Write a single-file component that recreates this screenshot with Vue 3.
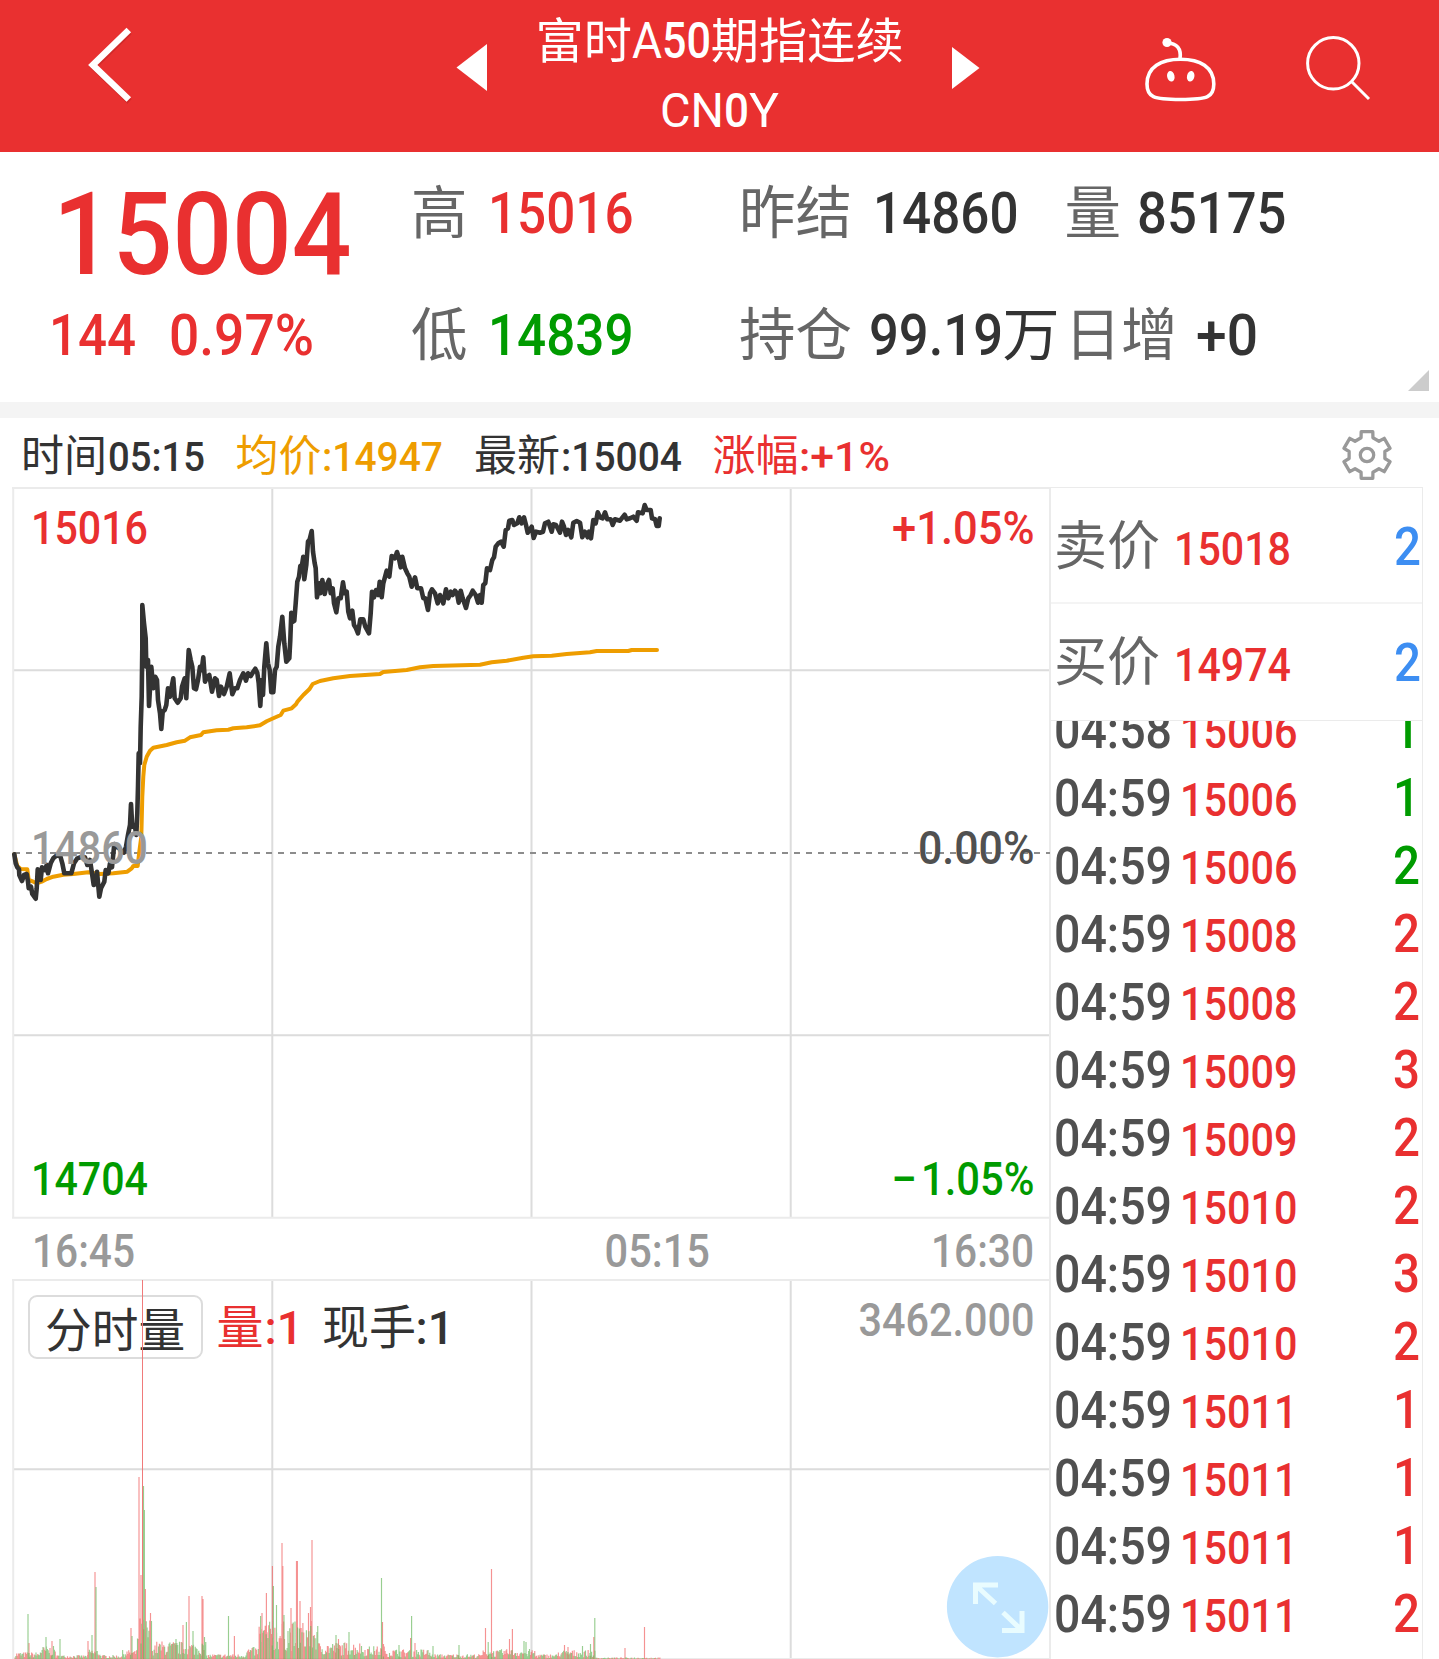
<script setup>
// Stretches a piece of text horizontally so that it takes exactly `value` pixels in the flow.
const vFit = {
  mounted(el, { value }) {
    const natural = el.getBoundingClientRect().width
    el.style.transform = `scaleX(${value / natural})`
    el.style.marginRight = `${value - natural}px`
  },
}

const quotes = [
  { label: '高', value: '15016', w: 145.5, tone: 'up', gap: 20.5 },
  { label: '昨结', value: '14860', w: 145.5, tone: '', gap: 20.5 },
  { label: '量', value: '85175', w: 149.5, tone: '', gap: 16 },
  { label: '低', value: '14839', w: 145.5, tone: 'down', gap: 20.5 },
  { label: '持仓', value: '99.19', w: 134, unit: '万', tone: '', gap: 16.5 },
  { label: '日增', value: '+0', w: 62, tone: '', gap: 18 },
]

const infos = [
  { label: '时间', value: '05:15', w: 97, tone: '' },
  { label: '均价', value: ':14947', w: 121, tone: 'avg' },
  { label: '最新', value: ':15004', w: 121, tone: '' },
  { label: '涨幅', value: ':+1%', w: 91, tone: 'up' },
]

const trades = [
  ['04:58', 15006, 1, 'down'],
  ['04:59', 15006, 1, 'down'],
  ['04:59', 15006, 2, 'down'],
  ['04:59', 15008, 2, 'up'],
  ['04:59', 15008, 2, 'up'],
  ['04:59', 15009, 3, 'up'],
  ['04:59', 15009, 2, 'up'],
  ['04:59', 15010, 2, 'up'],
  ['04:59', 15010, 3, 'up'],
  ['04:59', 15010, 2, 'up'],
  ['04:59', 15011, 1, 'up'],
  ['04:59', 15011, 1, 'up'],
  ['04:59', 15011, 1, 'up'],
  ['04:59', 15011, 2, 'up'],
]

const labels = [
  { x: 31, y: 544, w: 117, fill: '#e93030', text: '15016' },
  { x: 31, y: 864, w: 117, fill: '#999', text: '14860' },
  { x: 31, y: 1195, w: 117, fill: '#009b00', text: '14704' },
  { x: 892, y: 544, w: 142.5, fill: '#e93030', text: '+1.05%' },
  { x: 918, y: 864, w: 116.5, fill: '#505050', text: '0.00%' },
  { x: 891, y: 1195, w: 26, fill: '#009b00', text: '−' },
  { x: 921, y: 1195, w: 113.5, fill: '#009b00', text: '1.05%' },
  { x: 32, y: 1266.7, w: 103, fill: '#999', text: '16:45' },
  { x: 604.5, y: 1266.7, w: 105.5, fill: '#999', text: '05:15' },
  { x: 931, y: 1266.7, w: 103, fill: '#999', text: '16:30' },
  { x: 858.5, y: 1336, w: 176, fill: '#999', text: '3462.000' },
  { x: 264.5, y: 1344.3, w: 38.5, fill: '#e93030', text: ':1' },
  { x: 415.5, y: 1344.3, w: 38.5, fill: '#333', text: ':1' },
]

// Gear outline: six teeth, each described by four polar points.
const gear = (() => {
  const pts = []
  for (let i = 0; i < 6; i++) {
    for (const [a, r] of [[-19, 18.2], [-14, 24], [14, 24], [19, 18.2]]) {
      const t = ((i * 60 - 90 + a) * Math.PI) / 180
      pts.push(`${(r * Math.cos(t)).toFixed(2)},${(r * Math.sin(t)).toFixed(2)}`)
    }
  }
  return pts.join(' ')
})()

// Line series are stored in thirds of a pixel, in two chunks with their own origin.
const toPoints = (chunks) =>
  chunks
    .map(([ox, oy, s]) =>
      s.split(' ').map((p) => {
        const [x, y] = p.split(',').map(Number)
        return `${(ox + x / 3).toFixed(1)},${(oy + y / 3).toFixed(1)}`
      }).join(' '))
    .join(' ')

const priceLine = toPoints([
  [0, 580, '43,823 47,850 52,862 57,868 58,885 66,903 72,885 80,882 84,905 86,925 93,920 97,942 107,956 110,925 113,868 122,900 126,862 134,870 140,855 144,880 152,850 160,835 168,828 180,825 187,850 193,880 214,880 222,850 232,835 240,832 255,832 262,855 270,840 276,880 281,915 287,912 291,875 298,950 303,925 313,905 317,870 325,880 330,850 336,862 343,792 350,800 358,805 365,815 372,818 378,800 384,765 390,735 393,672 397,740 404,735 409,765 412,700 414,620 416,520 420,550 422,440 425,350 427,200 427,75 432,130 437,175 439,260 444,240 447,378 454,260 460,325 466,290 471,300 474,360 480,400 484,447 488,395 494,390 499,375 504,325 510,350 515,320 520,295 524,355 533,368 542,355 546,320 554,295 559,355 566,210 572,240 577,260 582,325 588,328 594,300 600,260 605,270 610,232 615,305 622,290 628,285 636,335 645,295 650,300 657,348 663,320 672,342 680,320 689,280 697,343 705,325 712,325 720,300 730,280 738,302 744,280 752,288 760,275 766,266 772,278 776,310 781,378 785,300 789,345 793,260 799,190 804,250 809,270 814,337'],
  [240, 480, '95,637 100,637 105,570 110,560 115,500 120,470 127,410 133,490 139,545 148,535 151,480 154,398 158,425 163,422 167,370 172,305 177,290 181,258 186,255 190,230 193,298 199,255 204,185 209,178 215,153 219,215 224,250 227,265 231,352 238,310 241,340 247,300 254,342 260,315 267,300 272,340 278,325 282,370 289,397 295,355 302,355 309,307 314,340 320,335 325,395 330,415 337,392 342,435 348,445 354,460 361,418 370,418 376,440 387,460 392,400 396,335 402,352 408,330 415,345 419,305 425,352 430,310 440,272 448,290 455,228 465,235 471,216 476,232 482,262 487,230 495,265 502,280 508,290 515,320 525,292 532,325 543,325 550,355 556,355 564,390 570,340 576,328 585,340 593,370 600,345 610,370 618,328 625,355 632,335 638,345 645,332 651,340 656,368 662,332 668,355 678,384 685,355 692,345 698,332 707,345 714,368 720,345 725,368 730,315 736,310 741,265 750,270 757,240 762,232 767,200 775,190 783,185 791,200 797,150 804,145 808,122 817,120 822,135 832,130 838,112 845,130 852,112 858,135 863,158 875,140 881,174 888,155 900,158 909,155 915,130 925,125 935,155 940,133 948,135 960,158 966,125 972,140 978,165 985,150 994,172 1000,128 1010,123 1020,128 1027,172 1035,155 1043,172 1047,155 1053,175 1060,120 1067,130 1073,97 1080,112 1088,115 1095,97 1102,118 1112,118 1118,135 1125,118 1140,122 1154,104 1160,118 1170,115 1180,110 1190,122 1194,97 1208,100 1214,75 1220,90 1232,90 1236,115 1245,118 1250,138 1256,138 1259,115'],
])

const averageLine = toPoints([
  [0, 580, '43,823 52,858 62,867 82,868 86,900 100,905 110,910 125,905 140,897 160,890 190,884 220,882 265,877 300,882 340,880 382,875 395,865 400,858 413,858 418,815 424,770 427,650 430,590 433,555 440,530 450,512 460,503 500,495 530,487 555,482 570,472 603,465 610,457 650,451 685,449 700,445 740,442 780,436 800,424 820,415 842,405 850,392 875,385 888,373 893,364 910,345 928,328'],
  [240, 480, '218,612 240,603 280,595 330,588 420,582 430,576 500,570 540,562 580,558 720,554 755,547 800,542 850,533 880,529 935,527 980,522 1050,517 1070,513 1165,513 1175,510 1251,510'],
])

// Volume: a low base level per time range, plus the notable peaks [x, height, rising].
const levels = [
  [40, 7], [56, 13], [88, 4], [100, 10], [122, 4], [137, 9], [152, 42], [182, 18], [206, 17],
  [246, 5], [259, 12], [318, 38], [362, 17], [385, 13], [430, 10], [482, 5], [500, 9], [535, 10],
  [558, 5], [596, 9], [662, 1.6],
]
const peaks = [
  [28, 45, 0], [29, 16, 1], [46, 22, 0], [52, 18, 1], [60, 20, 0], [88, 18, 1], [92, 24, 0],
  [95, 87, 1], [96, 72, 0], [131, 31, 1], [132, 23, 0], [139, 182, 1], [141, 84, 1],
  [143.5, 173, 0], [144.4, 149, 0], [145.4, 70, 1], [150.5, 46, 1], [176, 20, 0], [183, 34, 1],
  [186.4, 37, 0], [189, 63, 1], [193, 28, 0], [202, 63, 1], [203, 60, 1], [204.5, 22, 0],
  [228.5, 43, 0], [234.4, 23, 1], [260.6, 43, 0], [262, 46, 1], [266.4, 66, 1], [272.4, 93, 1],
  [273.4, 73, 0], [276.5, 54, 0], [282, 116, 1], [282.8, 93, 1], [284, 44, 0], [291, 51, 1],
  [296.5, 98, 1], [297.4, 98, 1], [300, 58, 1], [308.5, 46, 1], [310.5, 52, 1], [312, 119, 1],
  [317, 27, 0], [336, 24, 0], [338.5, 20, 1], [349, 27, 0], [381.5, 81, 0], [382.5, 37, 1],
  [383.5, 15, 1], [399, 14, 0], [410.6, 21, 1], [411.6, 43, 0], [415, 16, 1], [433, 13, 0],
  [459, 14, 0], [485.5, 31, 1], [488.2, 17, 0], [491.5, 90, 1], [509.5, 20, 1], [512.4, 30, 1],
  [524, 18, 0], [526, 17, 0], [564.5, 14, 1], [568, 12, 1], [582.5, 13, 0], [590.5, 15, 0],
  [593.8, 22, 1], [594.8, 41, 0], [625, 11, 1], [644.5, 32, 1],
]
const volume = (() => {
  let seed = 7
  const rand = () => (seed = (seed * 16807) % 2147483647) / 2147483647
  const out = ['', '']
  const bar = (x, h, up) => { out[up] += `M${x.toFixed(2)} 1659V${(1659 - h).toFixed(1)}` }
  for (let x = 15; x < 660; x += 0.875) {
    const level = levels.find(([end]) => x < end)[1]
    bar(x, level * (0.2 + 0.8 * rand()), rand() > 0.48 ? 1 : 0)
  }
  peaks.forEach(([x, h, up]) => bar(x, h, up))
  return out
})()

const gridX = [272.3, 531.5, 790.7]
</script>

<template>
  <div class="app">
    <header class="bar">
      <svg class="back" width="60" height="152" viewBox="80 0 60 152">
        <path d="M129.500 32 93.500 67 129.500 101.500" fill="none" stroke="#a51d1d" stroke-opacity=".35" stroke-width="6" />
        <path d="M128.800 30 92.800 65 128.800 99.500" fill="none" stroke="#fff" stroke-width="6.5" />
      </svg>
      <svg class="prev" width="44" height="152" viewBox="450 0 44 152">
        <path d="M456.500 67.500 487 44V91Z" fill="#fff" />
      </svg>
      <div class="title">
        <div>富时<span v-fit="30" class="fit a50">A</span><span v-fit="49" class="fit a50 mid">50</span>期指连续</div>
        <div><span v-fit="64" class="fit">CN</span><span v-fit="25" class="fit mid">0</span><span v-fit="30" class="fit">Y</span></div>
      </div>
      <svg width="40" height="152" viewBox="945 0 40 152">
        <path d="M979.500 68 952 47V89Z" fill="#fff" />
      </svg>
      <svg class="robot" width="84" height="152" viewBox="1141 0 84 152">
        <g fill="none" stroke="#fff" stroke-width="3.600">
          <path d="M1168 43C1178 43 1182.500 49 1181 58.500" />
          <path d="M1181.500 59.200C1201 59.200 1214.800 67 1214.800 84C1214.800 97 1209 99.500 1181.500 99.500C1154 99.500 1148 97 1148 84C1148 67 1162 59.200 1181.500 59.200Z" />
        </g>
        <circle cx="1168" cy="42.500" r="4.600" fill="#fff" />
        <ellipse cx="1171.800" cy="76.300" rx="3.700" ry="5.300" fill="#fff" transform="rotate(-12 1171.800 76.300)" />
        <ellipse cx="1191.700" cy="76.300" rx="3.700" ry="5.300" fill="#fff" transform="rotate(12 1191.700 76.300)" />
      </svg>
      <svg class="search" width="76" height="152" viewBox="1301 0 76 152" fill="none" stroke="#fff" stroke-width="3">
        <circle cx="1334.300" cy="63.300" r="25.700" />
        <path d="M1352.500 81.500 1370 99" />
      </svg>
    </header>

    <section class="quote">
      <div class="price up">
        <div class="last"><span v-fit="298.5" class="fit">15004</span></div>
        <div class="change"><span v-fit="87" class="fit">144</span><span v-fit="145" class="fit pct">0.97%</span></div>
      </div>
      <div class="stats">
        <div v-for="q in quotes" :key="q.label" class="stat">
          <span class="name">{{ q.label }}</span>
          <span v-fit="q.w" class="fit num" :class="q.tone" :style="{ marginLeft: q.gap + 'px' }">{{ q.value }}</span>
          <span v-if="q.unit" class="unit">{{ q.unit }}</span>
        </div>
      </div>
      <svg class="corner" width="21" height="21" viewBox="0 0 21 21"><path d="M21 0V21H0Z" fill="#ccc" /></svg>
    </section>

    <section class="info">
      <div v-for="i in infos" :key="i.label" class="item" :class="i.tone">
        <span>{{ i.label }}</span><span v-fit="i.w" class="fit num">{{ i.value }}</span>
      </div>
      <svg class="gear" width="60" height="60" viewBox="-30 -30 60 60" fill="none" stroke="#999" stroke-width="3.300" stroke-linejoin="round">
        <polygon :points="gear" />
        <circle r="6.700" />
      </svg>
    </section>

    <main class="main">
      <svg class="chart" width="1051" height="1172" viewBox="0 487 1051 1172">
        <g stroke="#dcdcdc" stroke-width="2">
          <path v-for="x in gridX" :key="x" :d="`M${x} 488V1217M${x} 1280V1659`" />
          <path d="M13 670.300H1050M13 1035.200H1050M13 1469.300H1050" />
        </g>
        <g fill="none" stroke="#ebebeb" stroke-width="2">
          <path d="M13.200 488V1218M13.200 1280V1659M1050 488V1659" />
          <path d="M12 488H1051M12 1217.700H1050M12 1280H1050M12 1659H1050" />
        </g>
        <path d="M14 853H1050" stroke="#8c8c8c" stroke-width="2" stroke-dasharray="6 6" />

        <polyline class="series" :points="averageLine" stroke="#ee9d00" />
        <polyline class="series price-line" :points="priceLine" stroke="#333" />

        <rect x="29" y="1296" width="173" height="62" rx="8" fill="none" stroke="#dcdcdc" stroke-width="2" />
        <g>
          <text x="45" y="1347" font-size="46.700" fill="#333">分时量</text>
          <text x="216.500" y="1344" font-size="47" fill="#e93030">量</text>
          <text x="322" y="1344" font-size="47" fill="#333">现手</text>
        </g>
        <path :d="volume[1]" stroke="#f05a5a" stroke-opacity=".66" stroke-width="1.150" />
        <path :d="volume[0]" stroke="#62b556" stroke-opacity=".66" stroke-width="1.150" />
        <path d="M142.500 1280V1659" stroke="#f07a7a" />

        <g class="labels">
          <text
            v-for="l in labels"
            :key="l.x + '-' + l.y"
            :x="l.x"
            :y="l.y"
            :textLength="l.w"
            lengthAdjust="spacingAndGlyphs"
            :fill="l.fill"
          >{{ l.text }}</text>
        </g>

        <circle cx="997.600" cy="1606.700" r="50.700" fill="#c0e4ff" />
        <g fill="none" stroke="#e9fcff" stroke-width="5">
          <path d="M998 1585H975.500V1604M976 1585.500 995.500 1603.500" />
          <path d="M1002 1630.500H1022V1611M1021.500 1630 1003 1612.500" />
        </g>
      </svg>

      <aside class="side">
        <div class="offer ask"><span>卖价</span><span v-fit="117" class="fit num up">15018</span><span v-fit="27" class="fit qty blue">2</span></div>
        <div class="offer bid"><span>买价</span><span v-fit="117" class="fit num up">14974</span><span v-fit="27" class="fit qty blue">2</span></div>
        <div class="trades">
          <div v-for="(t, k) in trades" :key="k" class="trade">
            <span v-fit="118" class="fit time">{{ t[0] }}</span>
            <span v-fit="117.5" class="fit num up">{{ t[1] }}</span>
            <span v-fit="27" class="fit qty" :class="t[3]">{{ t[2] }}</span>
          </div>
        </div>
      </aside>
    </main>
  </div>
</template>

<style>
body {
  margin: 0;
  background: #fff;
}
</style>

<style scoped>
.app {
  width: 1439px;
  height: 1659px;
  overflow: hidden;
  background: #fff;
  color: #333;
  font-family: Roboto, "Noto Sans CJK SC", sans-serif;
  white-space: nowrap;
}
svg {
  display: block;
  flex: none;
}
.fit {
  display: inline-block;
  flex: none;
  transform-origin: 0 50%;
}
.up { color: #e93030; }
.down { color: #009b00; }
.avg { color: #ee9d00; }
.blue { color: #3d8ef2; }

.bar {
  display: flex;
  height: 152px;
  background: #e93030;
  color: #fff;
}
.back { margin-left: 80px; }
.prev { margin-left: 310px; }
.title {
  width: 451px;
  padding-top: 6px;
  box-sizing: border-box;
  font-size: 48.2px;
  line-height: 70px;
  text-align: center;
}
.title > div { height: 70px; }
.a50 { font-size: 49.7px; }
.mid { font-weight: 500; }
.robot { margin-left: 155px; }
.search { margin-left: 76px; }

.quote {
  position: relative;
  display: flex;
  height: 250px;
  border-bottom: 16px solid #f4f4f4;
  line-height: 122px;
  font-size: 57.7px;
}
.price {
  width: 362px;
  padding-left: 49px;
  font-weight: 500;
}
.last {
  height: 122px;
  margin: 22px 0 -22px 3.5px;
  font-size: 115.8px;
}
.change {
  display: flex;
  height: 122px;
}
.pct { margin-left: 33px; }
.stats {
  display: grid;
  grid-template-columns: 328px 325.500px 1fr;
  grid-template-rows: 122px 122px;
}
.stat {
  display: flex;
  align-items: baseline;
}
.name {
  color: #666;
  font-size: 56.5px;
}
.unit { font-size: 57px; }
.num { font-weight: 500; }
.corner {
  position: absolute;
  right: 10px;
  bottom: 11px;
}

.info {
  display: flex;
  height: 69px;
  padding-left: 21px;
  line-height: 76px;
  font-size: 43px;
}
.item {
  display: flex;
  align-items: baseline;
  margin-right: 31px;
}
.info .num {
  margin-left: 0.5px;
  font-size: 41.5px;
}
.gear { margin: 7px 42px 0 auto; }

.main { display: flex; }
.series {
  fill: none;
  stroke-width: 4;
  stroke-linejoin: round;
  stroke-linecap: round;
}
.price-line { stroke-width: 4.6; }
.labels {
  font-size: 46.4px;
  font-weight: 500;
}

.side {
  width: 371px;
  height: 1171px;
  border-top: 1px solid #ebebeb;
  border-right: 1px solid #ebebeb;
}
.offer {
  display: flex;
  align-items: baseline;
  padding: 0 1px 0 3px;
  line-height: 117px;
  font-size: 53px;
  color: #666;
}
.offer .num {
  margin-left: 13.5px;
  font-size: 46.4px;
}
.qty {
  margin-left: auto;
  font-size: 53.5px;
  font-weight: 500;
}
.ask {
  height: 114px;
  border-bottom: 2px solid #f4f4f4;
}
.bid {
  height: 116px;
  border-bottom: 1px solid #ebebeb;
}
.trades {
  height: 938px;
  overflow: hidden;
}
.trade {
  display: flex;
  align-items: baseline;
  height: 68px;
  padding: 0 2.5px;
  line-height: 68px;
  position: relative;
  top: -25px;
}
.time {
  color: #505050;
  font-size: 51.5px;
  font-weight: 500;
}
.trade .num {
  margin-left: 8px;
  font-size: 46.4px;
}
.up.qty, .up.num { color: #e93030; }
.down.qty { color: #009b00; }
.down.num { color: #009b00; }
.blue.qty { color: #3d8ef2; }
</style>
